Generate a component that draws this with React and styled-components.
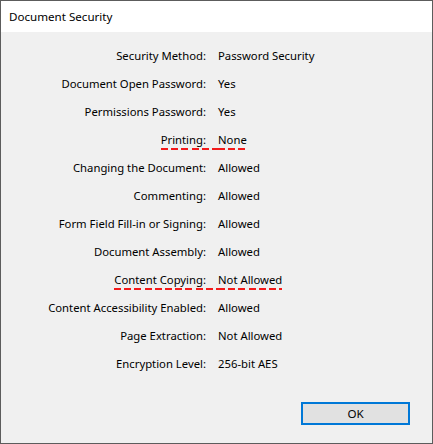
import React from 'react';
import styled, { createGlobalStyle } from 'styled-components';

const uiFont = '"Noto Sans", "Open Sans", Arial, sans-serif';
const flagRed = '#f31b1b';

const GlobalStyle = createGlobalStyle`
  html, body {
    margin: 0;
    padding: 0;
    background: #ffffff;
  }
  * {
    box-sizing: border-box;
  }
`;

const Dialog = styled.div`
  width: 433px;
  height: 444px;
  border: 1px solid #5c5c5c;
  display: flex;
  flex-direction: column;
  background: #f0f0f0;
  font-family: ${uiFont};
  font-size: 11.3px;
  color: #000;
`;

const TitleBar = styled.div`
  height: 31px;
  background: #fff;
  display: flex;
  align-items: center;
  padding-left: 8px;
  padding-bottom: 1px;
  font-size: 11.6px;
`;

const Body = styled.div`
  flex: 1;
  display: flex;
  flex-direction: column;
  padding-top: 10px;
`;

const Row = styled.div`
  display: grid;
  grid-template-columns: 205px auto;
  height: 28px;
  padding-top: 6px;
  align-items: start;
`;

const Label = styled.div`
  text-align: right;
`;

const Text = styled.span`
  display: inline-block;
  line-height: 16px;
  padding-bottom: 2px;
  white-space: nowrap;
  padding-right: ${(p) => (p.$gap ? '12px' : '0')};
  margin-right: ${(p) => (p.$gap ? '-12px' : '0')};
  background-image: ${(p) =>
    p.$flag
      ? `repeating-linear-gradient(to right, ${flagRed} 0 7px, transparent 7px 10.2px)`
      : 'none'};
  background-size: 100% 2px;
  background-repeat: no-repeat;
  background-position: left bottom;
`;

const Value = styled.div`
  padding-left: 12px;
`;

const Footer = styled.div`
  margin-top: auto;
  display: flex;
  justify-content: flex-end;
  padding: 0 22px 18px 0;
`;

const OkButton = styled.button`
  width: 109px;
  height: 23px;
  background: #e1e1e1;
  border: 2px solid #0078d7;
  font-family: ${uiFont};
  font-size: 11.6px;
  color: #000;
  padding: 0;
`;

const rows = [
  ['Security Method', 'Password Security'],
  ['Document Open Password', 'Yes'],
  ['Permissions Password', 'Yes'],
  ['Printing', 'None', true],
  ['Changing the Document', 'Allowed'],
  ['Commenting', 'Allowed'],
  ['Form Field Fill-in or Signing', 'Allowed'],
  ['Document Assembly', 'Allowed'],
  ['Content Copying', 'Not Allowed', true],
  ['Content Accessibility Enabled', 'Allowed'],
  ['Page Extraction', 'Not Allowed'],
  ['Encryption Level', '256-bit AES'],
];

export default function App() {
  return (
    <>
      <GlobalStyle />
      <Dialog>
        <TitleBar>Document Security</TitleBar>
        <Body>
          {rows.map(([label, value, flag]) => (
            <Row key={label}>
              <Label>
                <Text $flag={flag} $gap={flag}>{label}:</Text>
              </Label>
              <Value>
                <Text $flag={flag}>{value}</Text>
              </Value>
            </Row>
          ))}
          <Footer>
            <OkButton>OK</OkButton>
          </Footer>
        </Body>
      </Dialog>
    </>
  );
}
